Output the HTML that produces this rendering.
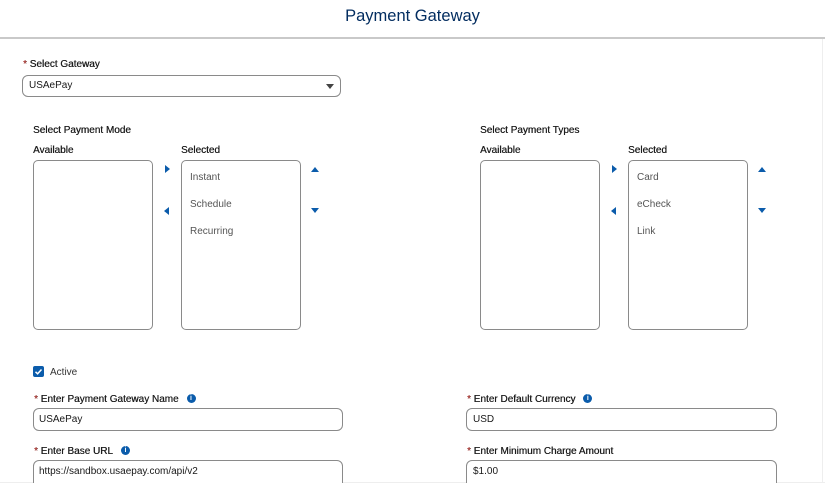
<!DOCTYPE html>
<html><head><meta charset="utf-8"><style>
*{box-sizing:border-box;margin:0;padding:0}
body{width:825px;height:492px;background:#fff;font-family:"Liberation Sans",sans-serif;color:#181818;position:relative;overflow:hidden}
.a{position:absolute}
.t{font-size:10px;white-space:nowrap}
.b{color:#1e1e1e;text-shadow:0.3px 0 0 #1e1e1e}
.box{position:absolute;border:1px solid #8a8a8a;border-radius:5px;background:#fff}
.req{color:#c23934}
.tri{position:absolute;width:0;height:0}
.r{border-top:4px solid transparent;border-bottom:4px solid transparent;border-left:5px solid #0b5cab}
.l{border-top:4px solid transparent;border-bottom:4px solid transparent;border-right:5px solid #0b5cab}
.u{border-left:4px solid transparent;border-right:4px solid transparent;border-bottom:5px solid #0b5cab}
.d{border-left:4px solid transparent;border-right:4px solid transparent;border-top:5px solid #0b5cab}
.i{display:inline-block;vertical-align:top;margin-left:8px;margin-top:0px;width:9px;height:9px;border-radius:50%;background:#0b5cab;color:#fff;font-size:7px;font-weight:bold;text-align:center;line-height:9px;text-shadow:none}
.item{color:#555}
</style></head><body>
<div class="a" style="left:0;top:7px;width:825px;text-align:center;font-size:16.5px;color:#032d60">Payment Gateway</div>
<div class="a" style="left:0;top:37px;width:825px;height:2px;background:#c9c9c9"></div>
<div class="a" style="left:822px;top:39px;width:1px;height:443px;background:#eee"></div>
<div class="a" style="left:0;top:482px;width:825px;height:1px;background:#eee"></div>

<div class="a t b" style="left:23px;top:59px"><span class="req">*</span> Select Gateway</div>
<div class="box" style="left:22px;top:75px;width:319px;height:22px;border-radius:6px"></div>
<div class="a t" style="left:29px;top:80px">USAePay</div>
<div class="tri" style="left:326px;top:84px;border-left:4px solid transparent;border-right:4px solid transparent;border-top:5px solid #444"></div>

<div class="a t b" style="left:33px;top:125px">Select Payment Mode</div>
<div class="a t b" style="left:33px;top:145px">Available</div>
<div class="box" style="left:33px;top:160px;width:120px;height:170px"></div>
<div class="tri r" style="left:165px;top:165px"></div>
<div class="tri l" style="left:164px;top:207px"></div>
<div class="a t b" style="left:181px;top:145px">Selected</div>
<div class="box" style="left:181px;top:160px;width:120px;height:170px"></div>
<div class="a t item" style="left:190px;top:172px">Instant</div>
<div class="a t item" style="left:190px;top:199px">Schedule</div>
<div class="a t item" style="left:190px;top:226px">Recurring</div>
<div class="tri u" style="left:311px;top:167px"></div>
<div class="tri d" style="left:311px;top:208px"></div>

<div class="a t b" style="left:480px;top:125px">Select Payment Types</div>
<div class="a t b" style="left:480px;top:145px">Available</div>
<div class="box" style="left:480px;top:160px;width:120px;height:170px"></div>
<div class="tri r" style="left:612px;top:165px"></div>
<div class="tri l" style="left:611px;top:207px"></div>
<div class="a t b" style="left:628px;top:145px">Selected</div>
<div class="box" style="left:628px;top:160px;width:120px;height:170px"></div>
<div class="a t item" style="left:637px;top:172px">Card</div>
<div class="a t item" style="left:637px;top:199px">eCheck</div>
<div class="a t item" style="left:637px;top:226px">Link</div>
<div class="tri u" style="left:758px;top:167px"></div>
<div class="tri d" style="left:758px;top:208px"></div>

<div class="a" style="left:33px;top:366px;width:11px;height:11px;background:#0b5cab;border-radius:2px"><svg width="11" height="11" style="display:block"><path d="M2.5 5.8 L4.6 7.8 L8.5 3.5" stroke="#fff" stroke-width="1.5" fill="none"/></svg></div>
<div class="a t" style="left:50px;top:367px;color:#333">Active</div>

<div class="a t b" style="left:34px;top:394px"><span class="req">*</span> Enter Payment Gateway Name<span class="i">i</span></div>
<div class="box" style="left:33px;top:408px;width:310px;height:23px;border-radius:6px"></div>
<div class="a t" style="left:39px;top:414px">USAePay</div>

<div class="a t b" style="left:34px;top:446px"><span class="req">*</span> Enter Base URL<span class="i">i</span></div>
<div class="box" style="left:33px;top:460px;width:310px;height:30px;border-radius:6px"></div>
<div class="a t" style="left:39px;top:466px">https://sandbox.usaepay.com/api/v2</div>

<div class="a t b" style="left:467px;top:394px"><span class="req">*</span> Enter Default Currency<span class="i">i</span></div>
<div class="box" style="left:466px;top:408px;width:311px;height:23px;border-radius:6px"></div>
<div class="a t" style="left:473px;top:414px">USD</div>

<div class="a t b" style="left:467px;top:446px"><span class="req">*</span> Enter Minimum Charge Amount</div>
<div class="box" style="left:466px;top:460px;width:311px;height:30px;border-radius:6px"></div>
<div class="a t" style="left:473px;top:466px">$1.00</div>

<div class="a" style="left:0;top:483px;width:825px;height:9px;background:#fff"></div>
</body></html>
